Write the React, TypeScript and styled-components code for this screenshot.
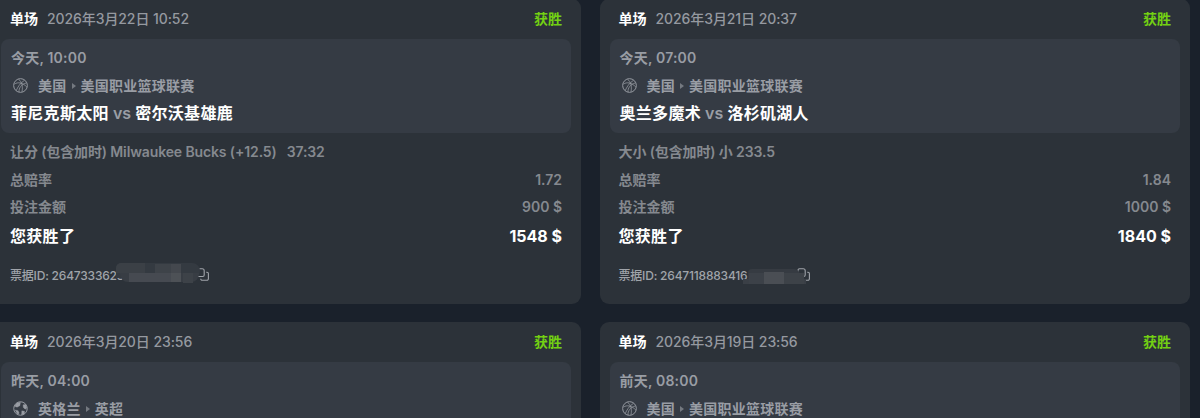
import React from "react";
import styled, { createGlobalStyle } from "styled-components";

type Block = {
  x: number;
  y: number;
  w: number;
  h: number;
  color: string;
  round?: string;
};

type Bet = {
  placed: string;
  start: string;
  sport: "basketball" | "football";
  country: string;
  league: string;
  home: string;
  away: string;
  market: string;
  score?: string;
  odds: string;
  stake: string;
  payout: string;
  ticket: string;
  ticketWidth: number;
  mask: Array<Block>;
};

const bets: Array<Bet> = [
  {
    placed: "2026年3月22日 10:52",
    start: "今天, 10:00",
    sport: "basketball",
    country: "美国",
    league: "美国职业篮球联赛",
    home: "菲尼克斯太阳",
    away: "密尔沃基雄鹿",
    market: "让分 (包含加时) Milwaukee Bucks (+12.5)",
    score: "37:32",
    odds: "1.72",
    stake: "900 $",
    payout: "1548 $",
    ticket: "2647333623",
    ticketWidth: 186,
    mask: [
      { x: 106, y: 0, w: 84, h: 15, color: "#343a41", round: "6px 9px 8px 0" },
      { x: 106, y: 0, w: 29, h: 10, color: "#3b4046", round: "5px 0 0 0" },
      { x: 110, y: 10, w: 79, h: 9, color: "#383d44", round: "0 0 8px 8px" },
      { x: 119, y: 10, w: 42, h: 9, color: "#464a51" },
      { x: 145, y: 1, w: 16, h: 9, color: "#3e4349" },
      { x: 161, y: 1, w: 10, h: 9, color: "#44484e" },
      { x: 161, y: 10, w: 10, h: 9, color: "#4d5156" },
      { x: 173, y: 10, w: 10, h: 10, color: "#3d4248" },
    ],
  },
  {
    placed: "2026年3月21日 20:37",
    start: "今天, 07:00",
    sport: "basketball",
    country: "美国",
    league: "美国职业篮球联赛",
    home: "奥兰多魔术",
    away: "洛杉矶湖人",
    market: "大小 (包含加时) 小 233.5",
    odds: "1.84",
    stake: "1000 $",
    payout: "1840 $",
    ticket: "2647118883416",
    ticketWidth: 178,
    mask: [
      { x: 129, y: 6, w: 52, h: 12, color: "#363b42", round: "4px 6px 0 0" },
      { x: 124, y: 16, w: 63, h: 5, color: "#3a3f46" },
      { x: 130, y: 10, w: 15, h: 11, color: "#3c4148" },
      { x: 145, y: 9, w: 20, h: 12, color: "#4a4e54" },
      { x: 165, y: 10, w: 20, h: 11, color: "#3d4248" },
    ],
  },
  {
    placed: "2026年3月20日 23:56",
    start: "昨天, 04:00",
    sport: "football",
    country: "英格兰",
    league: "英超",
    home: "",
    away: "",
    market: "",
    odds: "",
    stake: "",
    payout: "",
    ticket: "",
    ticketWidth: 0,
    mask: [],
  },
  {
    placed: "2026年3月19日 23:56",
    start: "前天, 08:00",
    sport: "basketball",
    country: "美国",
    league: "美国职业篮球联赛",
    home: "",
    away: "",
    market: "",
    odds: "",
    stake: "",
    payout: "",
    ticket: "",
    ticketWidth: 0,
    mask: [],
  },
];

const BasketballIcon = () => (
  <SportSvg viewBox="0 0 14 14">
    <circle cx="7" cy="7" r="6.4" />
    <path
      d="M3 11.8C4.4 8.4 6.6 5 10.6 2.2M1.4 5.6C4.6 3.6 9 4.2 12.9 8.4M5.2 1.2C8.2 3.4 9.4 8 8.4 12.8M5.6 13C5.4 9.4 7.6 6 12.4 4.6"
      strokeWidth="0.7"
    />
  </SportSvg>
);

const FootballIcon = () => (
  <SportSvg viewBox="0 0 14 14">
    <circle cx="7" cy="7" r="6.3" />
    <path
      d="M3.6 1.8L7 1.2L6.4 4.4L3.8 5.8L1.4 5ZM9.4 3.6L11.8 3.2L13 6.6L11.4 7.6L9.6 6ZM2 8.4L4.8 9L5.8 11.4L4.4 12.6ZM8.2 9.2L10.8 9.6L10.6 12L8 13Z"
      fill="currentColor"
      strokeWidth="0.3"
    />
  </SportSvg>
);

const CopyIcon = () => (
  <CopySvg viewBox="0 0 13 13">
    <path d="M1 8.5V2.2A1.5 1.5 0 0 1 2.5 0.7H6.2A2 2 0 0 1 8.2 2.7V7A1.5 1.5 0 0 1 6.7 8.5Z" />
    <path d="M10.2 4.2H11A1.4 1.4 0 0 1 12.4 5.6V10.8A1.5 1.5 0 0 1 10.9 12.3H6.2A1.5 1.5 0 0 1 4.7 10.8" />
  </CopySvg>
);

const BetCard = ({ bet }: { bet: Bet }) => (
  <Card>
    <CardHeader>
      <BetType>单场</BetType>
      <PlacedAt>{bet.placed}</PlacedAt>
      <Status>获胜</Status>
    </CardHeader>
    <Match>
      <StartTime>{bet.start}</StartTime>
      <League>
        {bet.sport === "football" ? <FootballIcon /> : <BasketballIcon />}
        {bet.country}
        <Arrow />
        {bet.league}
      </League>
      {bet.home && (
        <Teams>
          {bet.home} <Versus>vs</Versus> {bet.away}
        </Teams>
      )}
    </Match>
    {bet.market && (
      <>
        <Market>
          <span>
            {bet.market}
            {bet.score && <Score>{bet.score}</Score>}
          </span>
        </Market>
        <Line>
          <span>总赔率</span>
          <span>{bet.odds}</span>
        </Line>
        <Line>
          <span>投注金额</span>
          <span>{bet.stake}</span>
        </Line>
        <Payout>
          <Won>您获胜了</Won>
          <span>{bet.payout}</span>
        </Payout>
        <Ticket>
          <TicketId $width={bet.ticketWidth}>票据ID: {bet.ticket}</TicketId>
          <CopyIcon />
          {bet.mask.map((b, i) => (
            <MaskBlock key={i} $block={b} />
          ))}
        </Ticket>
      </>
    )}
  </Card>
);

export default function App() {
  return (
    <Page>
      <GlobalStyle />
      <BetGrid>
        {bets.map(bet => (
          <BetCard key={bet.placed} bet={bet} />
        ))}
      </BetGrid>
    </Page>
  );
}

const GlobalStyle = createGlobalStyle`
  body {
    margin: 0;
    background: #1a212b;
  }
`;

const Page = styled.div`
  height: 418px;
  overflow: hidden;
  background: #1a212b;
  font-family: Inter, "Noto Sans CJK SC", sans-serif;
  font-size: 14px;
  font-weight: 600;
  color: #85898f;
  white-space: nowrap;
`;

const BetGrid = styled.div`
  display: grid;
  grid-template-columns: 590px 590.5px;
  grid-auto-rows: 304.5px;
  gap: 18.5px;
  margin: -1px 0 0 -9px;
`;

const Card = styled.div`
  box-sizing: border-box;
  padding: 0 10px;
  border-radius: 9px;
  background: #2c3239;
`;

const CardHeader = styled.div`
  box-sizing: border-box;
  display: flex;
  align-items: center;
  height: 40px;
  padding: 0 9px 2px;
`;

const BetType = styled.span`
  color: #fff;
  font-weight: 700;
`;

const PlacedAt = styled.span`
  margin-left: 9px;
  font-weight: 500;
  letter-spacing: -0.08px;
  color: #9599a0;
`;

const Status = styled.span`
  margin-left: auto;
  color: #73d013;
  font-weight: 700;
`;

const Match = styled.div`
  box-sizing: border-box;
  height: 94px;
  padding: 5px 10px 0;
  border-radius: 8px;
  background: #353b44;
  color: #999da4;
`;

const StartTime = styled.div`
  height: 28px;
  line-height: 28px;
  letter-spacing: 0.2px;
`;

const League = styled.div`
  box-sizing: border-box;
  display: flex;
  align-items: center;
  height: 27px;
  padding-bottom: 2px;
  letter-spacing: 0.25px;
`;

const SportSvg = styled.svg`
  width: 15px;
  height: 15px;
  margin: 2px 10px 0 2px;
  fill: none;
  stroke: currentColor;
  stroke-width: 0.9;
`;

const Arrow = styled.i`
  margin: 2px 5px 0 5px;
  border: solid transparent;
  border-width: 3px 0 3px 4px;
  border-left-color: #747980;
`;

const Teams = styled.div`
  height: 28px;
  line-height: 28px;
  font-size: 16px;
  font-weight: 700;
  letter-spacing: 0.3px;
  color: #fff;
`;

const Versus = styled.span`
  color: #9a9ea5;
  font-weight: 600;
  letter-spacing: 0;
`;

const Line = styled.div`
  display: flex;
  justify-content: space-between;
  height: 27.5px;
  padding: 0 9px;
  line-height: 27.5px;
`;

const Market = styled(Line)`
  margin-top: 5px;
  letter-spacing: -0.12px;
`;

const Score = styled.span`
  margin-left: 10px;
`;

const Payout = styled(Line)`
  height: 31px;
  line-height: 31px;
  font-size: 16px;
  font-weight: 700;
  color: #fff;
`;

const Won = styled.span`
  letter-spacing: 0.3px;
`;

const Ticket = styled.div`
  position: relative;
  display: flex;
  align-items: center;
  height: 24px;
  margin-top: 11px;
  padding: 0 9px;
  font-size: 12px;
  font-weight: 500;
  color: #a0a4aa;
`;

const TicketId = styled.span<{ $width: number }>`
  width: ${props => props.$width}px;
  letter-spacing: -0.2px;
`;

const CopySvg = styled.svg`
  width: 13px;
  height: 13px;
  fill: none;
  stroke: #a0a4aa;
  stroke-width: 1.1;
`;

const MaskBlock = styled.i<{ $block: Block }>`
  position: absolute;
  left: ${props => props.$block.x + 9}px;
  top: ${props => props.$block.y}px;
  width: ${props => props.$block.w}px;
  height: ${props => props.$block.h}px;
  border-radius: ${props => props.$block.round || 0};
  background: ${props => props.$block.color};
`;
